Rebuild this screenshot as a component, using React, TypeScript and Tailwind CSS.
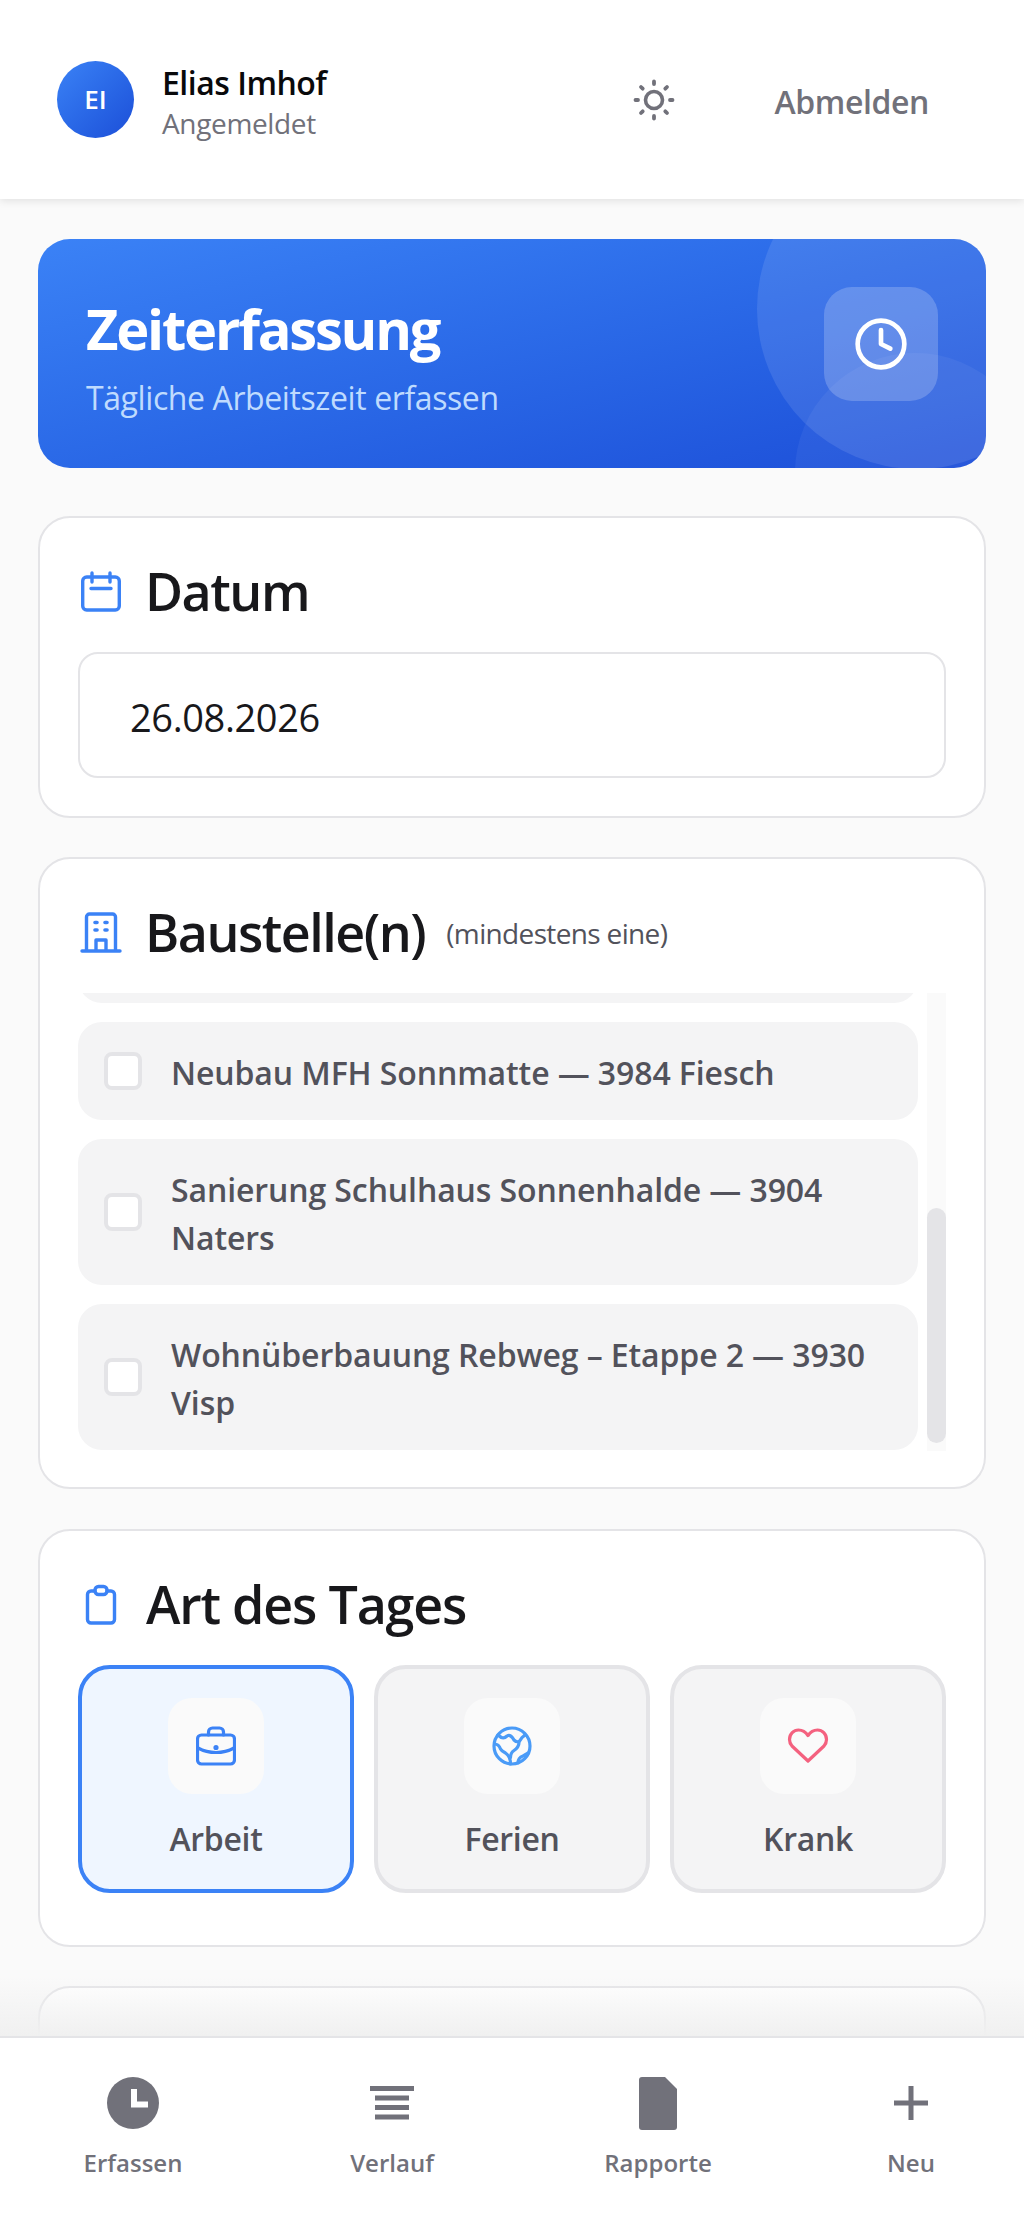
import React from "react";
import { Clock } from "lucide-react";

const font = { fontFamily: '"Open Sans", "Noto Sans", sans-serif' };

function Sun() {
  return (
    <svg width="44" height="44" viewBox="0 0 44 44" fill="none" stroke="#71717a" strokeWidth="3.8" strokeLinecap="round">
      <circle cx="22" cy="22" r="8.5" strokeWidth="3.6" />
      <path d="M22 3.500v2.500M22 38v2.500M3.500 22H6M38 22h2.500M9 9l1.700 1.700M33.300 33.300 35 35M9 35l1.700-1.700M33.300 10.700 35 9" />
    </svg>
  );
}
function CalendarIcon() {
  return (
    <svg width="42" height="42" viewBox="0 0 42 42" fill="none" stroke="#3b82f6" strokeWidth="3.4" strokeLinecap="round" strokeLinejoin="round">
      <rect x="2.700" y="6" width="36.600" height="33" rx="4" />
      <path d="M12 2v9M30 2v9M11 17.500h20" />
    </svg>
  );
}
function BuildingIcon() {
  return (
    <svg width="42" height="42" viewBox="0 0 42 42" fill="none" stroke="#3b82f6" strokeWidth="3.4" strokeLinecap="round" strokeLinejoin="round">
      <path d="M2 39h38M6.500 39V5a3 3 0 0 1 3-3h23a3 3 0 0 1 3 3v34M16 39V28h10v11" />
      <path d="M15 10.500h2M25 10.500h2M15 18h2M25 18h2" strokeWidth="3.600" />
    </svg>
  );
}
function ClipboardIcon() {
  return (
    <svg width="42" height="42" viewBox="0 0 42 42" fill="none" stroke="#3b82f6" strokeWidth="3.4" strokeLinecap="round" strokeLinejoin="round">
      <path d="M15 7h-4a3.500 3.500 0 0 0-3.500 3.500v25A3.500 3.500 0 0 0 11 39h20a3.500 3.500 0 0 0 3.500-3.500v-25A3.500 3.500 0 0 0 31 7h-4" />
      <rect x="15" y="2.500" width="12" height="8" rx="3.500" />
    </svg>
  );
}
function BriefcaseIcon() {
  return (
    <svg width="40" height="40" viewBox="0 0 40 40" fill="none" stroke="#3b82f6" strokeWidth="3.2" strokeLinecap="round" strokeLinejoin="round">
      <rect x="1.500" y="9" width="37" height="29" rx="4" />
      <path d="M12.500 9V6a4 4 0 0 1 4-4h7a4 4 0 0 1 4 4v3M2 22c11 6 25 6 36 0" />
      <circle cx="20" cy="21.500" r="1" fill="#3b82f6" />
    </svg>
  );
}
function GlobeIcon() {
  return (
    <svg width="40" height="40" viewBox="0 0 40 40" fill="none" stroke="#4a9bf7" strokeWidth="3.2" strokeLinecap="round" strokeLinejoin="round">
      <circle cx="20" cy="20" r="18" />
      <path d="M6 9c3 3 6 4 9 1 3-2 5 1 7 4 2 2 5 3 7-1 1-2 3-3 4-4" />
      <path d="M2.500 18c3 0 5 2 6 5 1 2 3 3 5 4 3 2 5 5 5 11" />
      <path d="M27 16.500c0 3-2 6-5 8-3 2-3.500 4.500-3.500 7" />
      <path d="M26 37c0-4 2-6 5-7 2-1 4-2 5-3" />
    </svg>
  );
}
function HeartIcon() {
  return (
    <svg width="42" height="42" viewBox="0 0 42 42" fill="none" stroke="#f4617f" strokeWidth="3.2" strokeLinecap="round" strokeLinejoin="round">
      <path d="M21 36 5 21A9.700 9.700 0 0 1 2.500 14.500C2.500 9 6.800 5 11.500 5c4 0 7.300 2.200 9.500 5.500C23.200 7.200 26.500 5 30.500 5c4.700 0 9 4 9 9.500 0 2.500-1 4.800-2.500 6.500L21 36Z" />
    </svg>
  );
}

function NavClock() {
  return (
    <svg width="52" height="52" viewBox="0 0 52 52">
      <circle cx="26" cy="26" r="26" fill="#71717a" />
      <path d="M27 12v15.500h14" fill="none" stroke="#fff" strokeWidth="6" />
    </svg>
  );
}
function NavList() {
  return (
    <svg width="44" height="34" viewBox="0 0 44 34" fill="#71717a">
      <rect x="0" y="0" width="44" height="5" />
      <rect x="5" y="9.500" width="34" height="5" />
      <rect x="5" y="19" width="34" height="5" />
      <rect x="5" y="28.500" width="34" height="5" />
    </svg>
  );
}
function NavDoc() {
  return (
    <svg width="38" height="53" viewBox="0 0 38 53" fill="#71717a">
      <path d="M3 0h23l12 12v38a3 3 0 0 1-3 3H3a3 3 0 0 1-3-3V3a3 3 0 0 1 3-3Z" />
    </svg>
  );
}
function NavPlus() {
  return (
    <svg width="34" height="34" viewBox="0 0 34 34" fill="#71717a">
      <rect x="14.500" y="0" width="5" height="34" />
      <rect x="0" y="14.500" width="34" height="5" />
    </svg>
  );
}

function SiteRow({ lines }: { lines: string }) {
  return (
    <div className="flex items-center gap-[29px] rounded-[24px] bg-[#f4f4f5] py-[25px] pl-[26px] pr-6">
      <span className="h-[38px] w-[38px] shrink-0 rounded-[8px] border-4 border-[#e4e4e7] bg-white" />
      <span className="relative top-[2px] text-[32px] font-semibold leading-[48px] tracking-[-0.1px] text-[#52525b]">{lines}</span>
    </div>
  );
}

function DayType({ label, active, icon }: { label: string; active?: boolean; icon: React.ReactNode }) {
  return (
    <div
      className={
        "flex h-[228px] flex-col items-center rounded-[32px] border-4 pt-[29px] " +
        (active ? "border-[#3b82f6] bg-[#eff6ff]" : "border-[#e4e4e7] bg-[#f4f4f5]")
      }
    >
      <div className="flex h-24 w-24 items-center justify-center rounded-[24px] bg-[#fafafa]">{icon}</div>
      <div className="mt-[21px] text-[32px] font-semibold leading-[48px] text-[#52525b] tracking-[-0.3px]">{label}</div>
    </div>
  );
}

function NavItem({ label, icon, width }: { label: string; icon: React.ReactNode; width: string }) {
  return (
    <div className={"flex flex-col items-center " + width}>
      <div className="-mt-[1px] flex h-[60px] items-center justify-center">{icon}</div>
      <div className="mt-[14px] text-[24px] font-semibold leading-[32px] text-[#71717a] tracking-[0px]">{label}</div>
    </div>
  );
}

export default function App() {
  return (
    <div style={font} className="relative h-[2219px] overflow-hidden bg-[#fafafa]">
      <header className="flex h-[199px] items-center justify-between bg-white pl-[57px] pr-[95px] shadow-[0_2px_8px_rgba(0,0,0,0.1)]">
        <div className="flex items-center gap-[28px]">
          <div className="flex h-[77px] w-[77px] items-center justify-center rounded-full bg-gradient-to-br from-[#3b82f6] to-[#1d4ed8] text-[26px] font-semibold text-white">
            EI
          </div>
          <div className="pt-[2px]">
            <div className="relative top-[2px] text-[32px] font-semibold leading-[44px] text-[#09090b] tracking-[-0.5px]">Elias Imhof</div>
            <div className="text-[28px] leading-[40px] text-[#71717a] tracking-[-0.35px]">Angemeldet</div>
          </div>
        </div>
        <div className="flex items-center gap-[99px]">
          <Sun />
          <div className="mt-[4px] text-[32px] font-semibold leading-[44px] text-[#71717a] tracking-[-0.4px]">Abmelden</div>
        </div>
      </header>

      <main className="flex flex-col gap-[39px] px-[38px] pt-10">
        <section className="relative mb-[9px] flex h-[229px] items-center justify-between overflow-hidden rounded-[32px] bg-gradient-to-br from-[#3b82f6] to-[#1d4ed8] pl-[47px] pr-[48px] text-white">
          <div className="absolute -right-[91px] -top-[90px] h-[320px] w-[320px] rounded-full bg-white/10" />
          <div className="absolute -bottom-[125px] -right-[49px] h-[240px] w-[240px] rounded-full bg-white/5" />
          <div className="relative ml-[1px] mt-[4px]">
            <div className="text-[56px] font-bold leading-[72px] tracking-[-2.2px]">Zeiterfassung</div>
            <div className="mt-[12px] text-[32px] leading-[44px] text-[#bfdbfe] tracking-[-0.4px]">Tägliche Arbeitszeit erfassen</div>
          </div>
          <div className="relative -mt-[19px] flex h-[114px] w-[114px] items-center justify-center rounded-[28px] bg-white/20">
            <Clock size={56} strokeWidth={2} color="#fff" />
          </div>
        </section>

        <section className="h-[302px] rounded-[32px] border-2 border-[#e4e4e7] bg-white px-[38px] pt-[38px]">
          <div className="flex h-[72px] items-center gap-[23px] pl-[2px]">
            <CalendarIcon />
            <h2 className="relative -top-[1px] text-[52px] font-semibold leading-[72px] text-[#18181b] tracking-[-1.500px]">Datum</h2>
          </div>
          <div className="mt-[24px] flex h-[126px] items-center rounded-[20px] border-2 border-[#e4e4e7] bg-white pl-[50px] text-[38px] text-[#18181b] tracking-[-0.4px]">
            <span className="relative top-[2px]">26.08.2026</span>
          </div>
        </section>

        <section className="relative h-[632px] rounded-[32px] border-2 border-[#e4e4e7] bg-white px-[38px] pt-[38px]">
          <div className="flex h-[72px] items-center gap-[23px] pl-[2px]">
            <BuildingIcon />
            <h2 className="relative -top-[1px] text-[52px] font-semibold leading-[72px] text-[#18181b] tracking-[-1.500px]">Baustelle(n)</h2>
            <span className="-ml-[2px] text-[28px] text-[#52525b] tracking-[-0.65px]">(mindestens eine)</span>
          </div>
          <div className="relative mt-[24px] flex h-[458px] overflow-hidden">
            <div className="flex flex-1 flex-col gap-[19px] overflow-hidden">
              <div className="-mt-[89px] h-[99px] shrink-0 rounded-[24px] bg-[#f4f4f5]" />
              <SiteRow lines="Neubau MFH Sonnmatte — 3984 Fiesch" />
              <SiteRow lines="Sanierung Schulhaus Sonnenhalde — 3904 Naters" />
              <SiteRow lines="Wohnüberbauung Rebweg – Etappe 2 — 3930 Visp" />
            </div>
            <div className="ml-[9px] w-[19px] bg-[#fafafa]">
              <div className="mt-[215px] h-[235px] rounded-full bg-[#e4e4e7]" />
            </div>
          </div>
        </section>

        <section className="mt-[1px] h-[418px] rounded-[32px] border-2 border-[#e4e4e7] bg-white px-[38px] pt-[38px]">
          <div className="flex h-[72px] items-center gap-[23px] pl-[2px]">
            <ClipboardIcon />
            <h2 className="relative -top-[1px] ml-[1px] text-[52px] font-semibold leading-[72px] text-[#18181b] tracking-[-1.200px]">Art des Tages</h2>
          </div>
          <div className="mt-[24px] grid grid-cols-3 gap-[20px]">
            <DayType label="Arbeit" active icon={<BriefcaseIcon />} />
            <DayType label="Ferien" icon={<GlobeIcon />} />
            <DayType label="Krank" icon={<HeartIcon />} />
          </div>
        </section>

        <section className="h-[300px] rounded-[32px] border-2 border-[#e4e4e7] bg-white" />
      </main>

      <div className="pointer-events-none absolute inset-x-0 bottom-[183px] h-[60px] bg-gradient-to-t from-[#f0f0f0] to-transparent" />
      <nav className="absolute inset-x-0 bottom-0 flex h-[183px] justify-around border-t-2 border-[#e4e4e7] bg-white pt-[36px]">
        <NavItem width="w-[113px]" label="Erfassen" icon={<NavClock />} />
        <NavItem width="w-[99px]" label="Verlauf" icon={<NavList />} />
        <NavItem width="w-[127px]" label="Rapporte" icon={<NavDoc />} />
        <NavItem width="w-[73px]" label="Neu" icon={<NavPlus />} />
      </nav>
    </div>
  );
}
